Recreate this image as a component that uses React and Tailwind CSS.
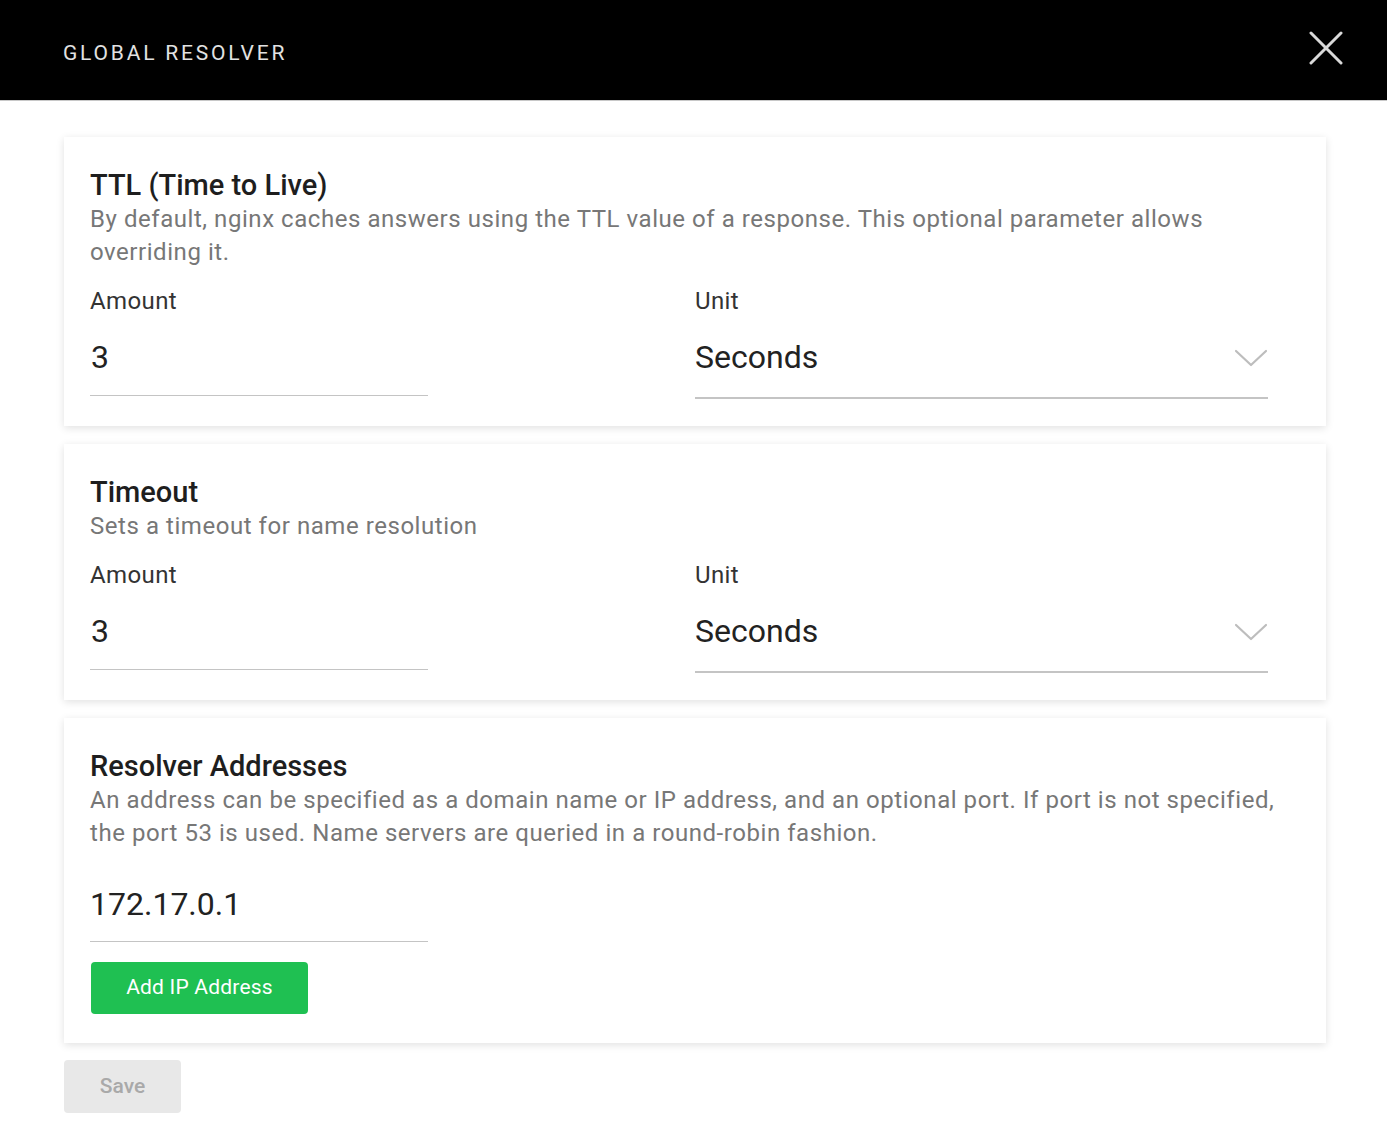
import React from "react";

function Chevron() {
  return (
    <svg width="34" height="18" viewBox="0 0 34 18" fill="none" className="shrink-0 mt-[2px]">
      <path d="M2 2 L17 16 L32 2" stroke="#bdbdbd" strokeWidth="2.2" strokeLinecap="round" strokeLinejoin="round" />
    </svg>
  );
}

function AmountUnit() {
  return (
    <div className="grid grid-cols-2 items-start mt-[17px]">
      <div>
        <div className="text-[24px] tracking-[0.4px] leading-[30px] text-[#333]">Amount</div>
        <div className="mt-[21px] w-[338px] border-b border-[#c4c4c4] pb-[18px] pl-[1px] text-[32px] leading-[40px] text-[#222]">3</div>
      </div>
      <div>
        <div className="text-[24px] tracking-[0.4px] leading-[30px] text-[#333]">Unit</div>
        <div className="mt-[21px] w-[573px] border-b-2 border-[#c4c4c4] pb-[20px] flex items-center justify-between text-[32px] leading-[40px] text-[#222]">
          <span>Seconds</span>
          <Chevron />
        </div>
      </div>
    </div>
  );
}

function Card({ title, children, className = "" }) {
  return (
    <div className={"bg-white shadow-[0_2px_8px_rgba(0,0,0,0.12)] px-[26px] pt-[30px] " + className}>
      <div className="text-[29px] leading-[36px] font-medium text-[#1e1e1e]">{title}</div>
      {children}
    </div>
  );
}

const desc = "text-[24px] leading-[33px] text-[#777] tracking-[0.55px]";

export default function App() {
  return (
    <div className="min-h-[1125px] bg-white" style={{ fontFamily: "Roboto, 'Noto Sans', Arial, sans-serif" }}>
      <div className="h-[101px] bg-black flex items-center justify-between pl-[63px] pr-[44px] border-b border-[#c8c8c8]">
        <div className="text-[21px] tracking-[2.8px] text-[#e2e2e2] mt-[7px]">GLOBAL RESOLVER</div>
        <svg width="34" height="34" viewBox="0 0 34 34" className="-mt-[4px]">
          <path d="M2 2 L32 32 M32 2 L2 32" stroke="#d9d9d9" strokeWidth="3" strokeLinecap="round" />
        </svg>
      </div>

      <div className="pl-[64px] pr-[61px] pt-[36px] flex flex-col gap-[18px]">
        <Card title="TTL (Time to Live)" className="pb-[27px]">
          <div className={desc}>
            By default, nginx caches answers using the TTL value of a response. This optional parameter allows overriding it.
          </div>
          <AmountUnit />
        </Card>

        <Card title="Timeout" className="pb-[27px]">
          <div className={desc}>Sets a timeout for name resolution</div>
          <AmountUnit />
        </Card>

        <Card title="Resolver Addresses" className="pb-[29px]">
          <div className={desc + " pr-[12px]"}>
            An address can be specified as a domain name or IP address, and an optional port. If port is not specified, the port 53 is used. Name servers are queried in a round-robin fashion.
          </div>
          <div className="mt-[34px] w-[338px] border-b border-[#c4c4c4] pb-[17px] text-[32px] leading-[40px] text-[#222]">172.17.0.1</div>
          <button className="mt-[20px] h-[52px] w-[217px] rounded-[4px] bg-[#1fc052] text-white text-[21px] tracking-[0.2px] ml-[1px]">Add IP Address</button>
        </Card>

        <div className="-mt-[1px]">
          <button className="h-[53px] w-[117px] rounded-[4px] bg-[#e8e8e8] text-[#a9a9a9] text-[21px] font-medium">Save</button>
        </div>
      </div>
    </div>
  );
}
